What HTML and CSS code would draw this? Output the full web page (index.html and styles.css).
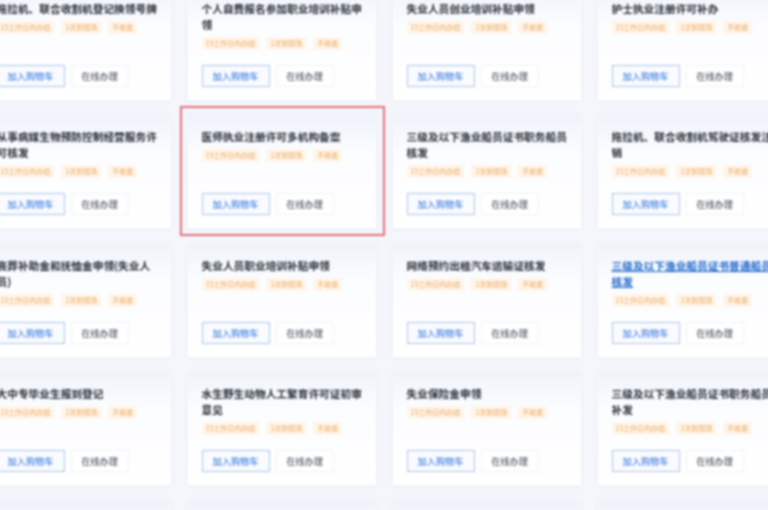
FILE: index.html
```html
<!DOCTYPE html>
<html lang="zh-CN">
<head>
<meta charset="utf-8">
<title>服务事项</title>
<link rel="stylesheet" href="styles.css">
</head>
<body>
<main class="grid">
<article class="card"><h3 class="title">拖拉机、联合收割机登记换领号牌</h3><div class="tags"><span class="tag">15工作日内办结</span><span class="tag">1次到现场</span><span class="tag">不收费</span></div><div class="actions"><a class="btn cart">加入购物车</a><a class="btn online">在线办理</a></div></article>
<article class="card"><h3 class="title">个人自费报名参加职业培训补贴申领</h3><div class="tags"><span class="tag">15工作日内办结</span><span class="tag">1次到现场</span><span class="tag">不收费</span></div><div class="actions"><a class="btn cart">加入购物车</a><a class="btn online">在线办理</a></div></article>
<article class="card"><h3 class="title">失业人员创业培训补贴申领</h3><div class="tags"><span class="tag">15工作日内办结</span><span class="tag">1次到现场</span><span class="tag">不收费</span></div><div class="actions"><a class="btn cart">加入购物车</a><a class="btn online">在线办理</a></div></article>
<article class="card"><h3 class="title">护士执业注册许可补办</h3><div class="tags"><span class="tag">15工作日内办结</span><span class="tag">1次到现场</span><span class="tag">不收费</span></div><div class="actions"><a class="btn cart">加入购物车</a><a class="btn online">在线办理</a></div></article>

<article class="card"><h3 class="title">从事病媒生物预防控制经营服务许可核发</h3><div class="tags"><span class="tag">15工作日内办结</span><span class="tag">1次到现场</span><span class="tag">不收费</span></div><div class="actions"><a class="btn cart">加入购物车</a><a class="btn online">在线办理</a></div></article>
<article class="card selected"><h3 class="title">医师执业注册许可多机构备案</h3><div class="tags"><span class="tag">15工作日内办结</span><span class="tag">1次到现场</span><span class="tag">不收费</span></div><div class="actions"><a class="btn cart">加入购物车</a><a class="btn online">在线办理</a></div></article>
<article class="card"><h3 class="title">三级及以下渔业船员证书职务船员核发</h3><div class="tags"><span class="tag">15工作日内办结</span><span class="tag">1次到现场</span><span class="tag">不收费</span></div><div class="actions"><a class="btn cart">加入购物车</a><a class="btn online">在线办理</a></div></article>
<article class="card"><h3 class="title">拖拉机、联合收割机驾驶证核发注销</h3><div class="tags"><span class="tag">15工作日内办结</span><span class="tag">1次到现场</span><span class="tag">不收费</span></div><div class="actions"><a class="btn cart">加入购物车</a><a class="btn online">在线办理</a></div></article>

<article class="card"><h3 class="title">丧葬补助金和抚恤金申领(失业人员)</h3><div class="tags"><span class="tag">15工作日内办结</span><span class="tag">1次到现场</span><span class="tag">不收费</span></div><div class="actions"><a class="btn cart">加入购物车</a><a class="btn online">在线办理</a></div></article>
<article class="card"><h3 class="title">失业人员职业培训补贴申领</h3><div class="tags"><span class="tag">15工作日内办结</span><span class="tag">1次到现场</span><span class="tag">不收费</span></div><div class="actions"><a class="btn cart">加入购物车</a><a class="btn online">在线办理</a></div></article>
<article class="card"><h3 class="title">网络预约出租汽车运输证核发</h3><div class="tags"><span class="tag">15工作日内办结</span><span class="tag">1次到现场</span><span class="tag">不收费</span></div><div class="actions"><a class="btn cart">加入购物车</a><a class="btn online">在线办理</a></div></article>
<article class="card"><h3 class="title link">三级及以下渔业船员证书普通船员核发</h3><div class="tags"><span class="tag">15工作日内办结</span><span class="tag">1次到现场</span><span class="tag">不收费</span></div><div class="actions"><a class="btn cart">加入购物车</a><a class="btn online">在线办理</a></div></article>

<article class="card"><h3 class="title">大中专毕业生报到登记</h3><div class="tags"><span class="tag">15工作日内办结</span><span class="tag">1次到现场</span><span class="tag">不收费</span></div><div class="actions"><a class="btn cart">加入购物车</a><a class="btn online">在线办理</a></div></article>
<article class="card"><h3 class="title">水生野生动物人工繁育许可证初审意见</h3><div class="tags"><span class="tag">15工作日内办结</span><span class="tag">1次到现场</span><span class="tag">不收费</span></div><div class="actions"><a class="btn cart">加入购物车</a><a class="btn online">在线办理</a></div></article>
<article class="card"><h3 class="title">失业保险金申领</h3><div class="tags"><span class="tag">15工作日内办结</span><span class="tag">1次到现场</span><span class="tag">不收费</span></div><div class="actions"><a class="btn cart">加入购物车</a><a class="btn online">在线办理</a></div></article>
<article class="card"><h3 class="title">三级及以下渔业船员证书职务船员补发</h3><div class="tags"><span class="tag">15工作日内办结</span><span class="tag">1次到现场</span><span class="tag">不收费</span></div><div class="actions"><a class="btn cart">加入购物车</a><a class="btn online">在线办理</a></div></article>

<article class="card"></article>
<article class="card"></article>
<article class="card"></article>
<article class="card"></article>
</main>
</body>
</html>
```
FILE: styles.css
```css
html {
  background: #f4f6fb;
}

body {
  margin: 0;
  width: 768px;
  height: 510px;
  overflow: hidden;
  font-family: "Noto Sans CJK SC", "Liberation Sans", sans-serif;
}

.grid {
  display: grid;
  grid-template-columns: repeat(4, 188px);
  grid-auto-rows: 114px;
  column-gap: 17px;
  row-gap: 14.4px;
  margin: -14px 0 0 -17px;
  width: 803px;
  filter: blur(0.85px);
}

.card {
  position: relative;
  display: flex;
  flex-direction: column;
  box-sizing: border-box;
  padding: 15px 13px 13px 13.5px;
  background: linear-gradient(180deg, #eff3fa 0, #fcfdff 40px, #ffffff 100%);
  box-shadow: 0 1px 4px rgba(214, 224, 240, 0.3);
}

.selected::after {
  content: "";
  position: absolute;
  inset: -8px -9px -8px -8px;
  border: 2px solid #e66f7a;
}

.title {
  margin: 0;
  font-size: 10.7px;
  line-height: 16px;
  font-weight: 700;
  color: #262c36;
}

.link {
  color: #1f68cc;
  text-decoration: underline;
}

.tags {
  display: flex;
  gap: 7px;
  margin-top: 4px;
}

.tag {
  height: 13px;
  padding: 0 4px;
  font-size: 7px;
  line-height: 13px;
  color: #eba75f;
  background: #fff5e9;
  white-space: nowrap;
}

.actions {
  display: flex;
  gap: 6px;
  margin-top: auto;
}

.btn {
  display: block;
  box-sizing: border-box;
  height: 22px;
  font-size: 9.2px;
  font-weight: 500;
  line-height: 20px;
  text-align: center;
}

.cart {
  width: 68px;
  color: #4b86e3;
  background: #f9fbff;
  border: 1px solid #adc5e6;
}

.online {
  width: 58px;
  color: #5c626c;
  background: #ffffff;
  border: 1px solid #f2f3f7;
}
```
